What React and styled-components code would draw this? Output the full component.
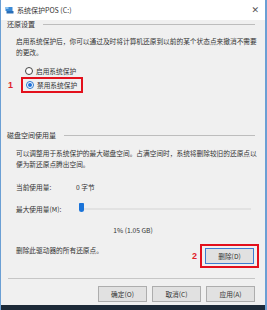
import React from 'react';
import styled, { createGlobalStyle } from 'styled-components';

const GlobalStyle = createGlobalStyle`
  html, body {
    margin: 0;
    padding: 0;
    background: #f0f0f0;
  }
  body {
    font-family: "Noto Sans CJK SC", "Noto Sans", sans-serif;
    font-size: 6.7px;
    color: #222;
  }
`;

const Window = styled.div`
  width: 267px;
  height: 310px;
  box-sizing: border-box;
  border-left: 1px solid #6b9fd4;
  border-right: 2px solid #6b9fd4;
  background: #f0f0f0;
  display: flex;
  flex-direction: column;
  overflow: hidden;
`;

const TitleBar = styled.div`
  height: 20px;
  background: #fff;
  display: flex;
  align-items: center;
  padding: 0 6px 0 4px;
  gap: 3px;
  flex-shrink: 0;
`;

const TitleText = styled.span`
  flex: 1;
  font-size: 7px;
  color: #333;
`;

const Close = styled.span`
  font-family: "DejaVu Sans", sans-serif;
  font-size: 9px;
  color: #555;
`;

const Body = styled.div`
  flex: 1;
  padding: 0 6px 0 6px;
  display: flex;
  flex-direction: column;
`;

const GroupHead = styled.div`
  display: flex;
  align-items: center;
  gap: 8px;
  height: 10px;
  margin-top: ${p => p.$top}px;
  font-size: 7px;
  color: #333;
  &::after {
    content: '';
    flex: 1;
    height: 1px;
    background: #bdbdbd;
    margin-right: 4px;
  }
`;

const Para = styled.p`
  margin: ${p => p.$top}px 0 0 9px;
  line-height: 10.5px;
  color: #333;
  white-space: nowrap;
`;

const RadioRow = styled.label`
  display: flex;
  align-items: center;
  gap: 3px;
  margin-left: ${p => p.$indent || 0}px;
  height: 10px;
  color: #333;
`;

const RadioMark = styled.span`
  width: 6px;
  height: 6px;
  border-radius: 50%;
  border: 1px solid ${p => (p.$on ? '#2a78d0' : '#444')};
  background: #fff;
  display: flex;
  align-items: center;
  justify-content: center;
  &::after {
    content: '';
    width: 4px;
    height: 4px;
    border-radius: 50%;
    background: ${p => (p.$on ? '#1e6fd9' : 'transparent')};
  }
`;

const MarkedRow = styled.div`
  display: flex;
  align-items: center;
  margin-top: ${p => p.$top}px;
`;

const StepNum = styled.span`
  font-family: "Liberation Sans", Arial, sans-serif;
  font-weight: bold;
  font-size: 9px;
  color: #e0202a;
  flex: 0 0 ${p => p.$w}px;
  text-align: ${p => (p.$right ? 'right' : 'left')};
  padding-right: ${p => p.$pad || 0}px;
  padding-left: ${p => p.$padL || 0}px;
  box-sizing: border-box;
  align-self: center;
`;

const RedBox = styled.div`
  border: 2px solid #e3101c;
  padding: ${p => p.$pad};
  display: flex;
  align-items: center;
`;

const InfoRow = styled.div`
  display: flex;
  align-items: center;
  margin: ${p => p.$top}px 0 0 9px;
  height: 10px;
  color: #333;
`;

const InfoLabel = styled.span`
  width: 60px;
`;

const Slider = styled.div`
  flex: 1;
  position: relative;
  height: 12px;
  display: flex;
  align-items: center;
  margin-right: 8px;
  &::before {
    content: '';
    flex: 1;
    height: 2px;
    background: #e2e2e2;
    margin-left: 3px;
  }
`;

const Thumb = styled.span`
  position: absolute;
  left: 3px;
  top: 0;
  width: 5px;
  height: 9px;
  background: #1a73d8;
  border-radius: 1px 1px 3px 3px;
`;

const Centered = styled.div`
  text-align: center;
  margin-top: 11px;
  color: #333;
`;

const DeleteRow = styled.div`
  display: flex;
  align-items: flex-start;
  margin-top: 9px;
  margin-left: 9px;
  color: #333;
`;

const Grow = styled.div`
  flex: 1;
  padding-top: 1px;
`;

const Button = styled.button`
  font-family: "Noto Sans CJK SC", sans-serif;
  font-size: 6.7px;
  color: #333;
  width: ${p => p.$w || 49}px;
  height: 16px;
  padding: 0;
  background: #e1e1e1;
  border: 1px solid ${p => (p.$focus ? '#3d7bd0' : '#adadad')};
  box-sizing: border-box;
`;

const Separator = styled.div`
  height: 1px;
  background: #c6c6c6;
  margin: 10px 4px 0 1px;
`;

const Footer = styled.div`
  display: flex;
  justify-content: flex-end;
  gap: 5px;
  margin-top: 7px;
  padding-right: 4px;
`;

const Taskbar = styled.div`
  height: 5px;
  background: #1d2a38;
  flex-shrink: 0;
`;

const ShieldIcon = () => (
  <svg width="9" height="8" viewBox="0 0 9 8">
    <rect x="0.5" y="1" width="7" height="4" fill="#3b8bd8" />
    <rect x="1.5" y="5" width="7" height="2.5" fill="#2a6fb8" />
    <rect x="0.5" y="1" width="3" height="2" fill="#8cc4f0" />
  </svg>
);

export default function App() {
  return (
    <>
      <GlobalStyle />
      <Window>
        <TitleBar>
          <ShieldIcon />
          <TitleText>系统保护POS (C:)</TitleText>
          <Close>✕</Close>
        </TitleBar>
        <Body>
          <GroupHead $top={-1}>还原设置</GroupHead>
          <Para $top={7}>
            启用系统保护后，你可以通过及时将计算机还原到以前的某个状态点来撤消不需要
            <br />
            的更改。
          </Para>
          <MarkedRow $top={9}>
            <RadioRow $indent={18}>
              <RadioMark />
              启用系统保护
            </RadioRow>
          </MarkedRow>
          <MarkedRow $top={1}>
            <StepNum $w={14} $padL={1}>1</StepNum>
            <RedBox $pad="1px 4px 1px 3px">
              <RadioRow>
                <RadioMark $on />
                禁用系统保护
              </RadioRow>
            </RedBox>
          </MarkedRow>
          <GroupHead $top={37}>磁盘空间使用量</GroupHead>
          <Para $top={8}>
            可以调整用于系统保护的最大磁盘空间。占满空间时，系统将删除较旧的还原点以
            <br />
            便为新还原点腾出空间。
          </Para>
          <InfoRow $top={13}>
            <InfoLabel>当前使用量:</InfoLabel>
            <span>0 字节</span>
          </InfoRow>
          <InfoRow $top={12}>
            <InfoLabel>最大使用量(M):</InfoLabel>
            <Slider>
              <Thumb />
            </Slider>
          </InfoRow>
          <Centered>1% (1.05 GB)</Centered>
          <DeleteRow>
            <Grow>删除此驱动器的所有还原点。</Grow>
            <StepNum $w={12} $right $pad={3}>2</StepNum>
            <RedBox $pad="2px 3px">
              <Button $focus>删除(D)</Button>
            </RedBox>
          </DeleteRow>
          <Separator />
          <Footer>
            <Button>确定(O)</Button>
            <Button>取消(C)</Button>
            <Button>应用(A)</Button>
          </Footer>
        </Body>
        <Taskbar />
      </Window>
    </>
  );
}
